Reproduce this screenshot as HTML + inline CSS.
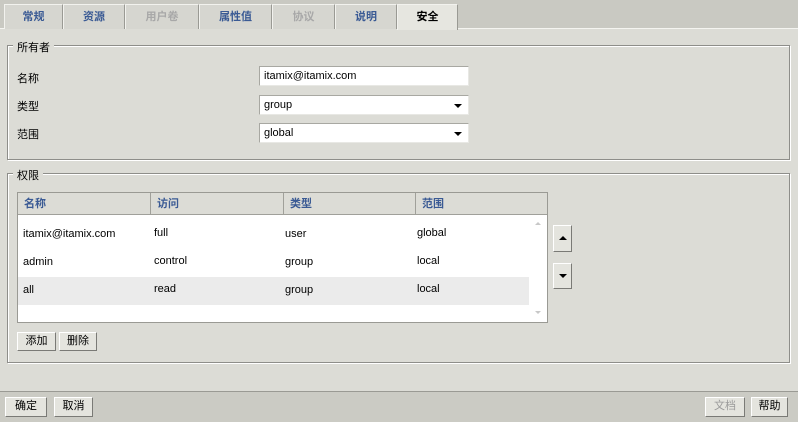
<!DOCTYPE html><html><head><meta charset="utf-8"><style>
*{box-sizing:border-box}
body{margin:0;width:798px;height:422px;background:#dcdcd6;font-family:"Liberation Sans","Noto Sans CJK SC",sans-serif;font-size:11px;color:#000;position:relative;overflow:hidden}
.a{position:absolute}
.tabbar{left:0;top:0;width:798px;height:29px;background:#c9c9c2;border-bottom:1px solid #f4f4f0}
.tab{top:4px;height:25px;background:#d6d6d0;border:1px solid #f2f2ee;border-right-color:#9a9a94;border-bottom:none;text-align:center;line-height:24px;font-weight:bold;color:#3a5a94;font-size:11px}
.tab.dis{color:#a8a8a8}
.tab.act{background:#e6e6e0;color:#000;height:26px}
fieldset{position:absolute;margin:0;padding:0;border:1px solid #8e8e8a;box-shadow:1px 1px 0 #fff inset,1px 1px 0 #fff}
.leg{background:#dcdcd6;padding:0 4px}
.inp{left:259px;width:210px;height:20px;background:#fff;border:1px solid #a8a8a2;border-right-color:#e8e8e4;border-bottom-color:#e8e8e4;padding-left:4px;line-height:18px}
.arr{right:6px;top:8px;width:0;height:0;border-left:4px solid transparent;border-right:4px solid transparent;border-top:4px solid #000}
.btn{height:19px;background:#e4e4de;border:1px solid #fff;border-right-color:#7a7a76;border-bottom-color:#7a7a76;text-align:center;line-height:17px}
.th{top:193px;height:22px;line-height:22px;color:#3a5a94;font-weight:bold;padding-left:6px;border-right:1px solid #a0a09a}
.td{padding-left:6px}
</style></head><body>
<div class="a tabbar"></div>
<div class="a tab" style="left:4px;width:59px">常规</div>
<div class="a tab" style="left:63px;width:62px">资源</div>
<div class="a tab dis" style="left:125px;width:74px">用户卷</div>
<div class="a tab" style="left:199px;width:73px">属性值</div>
<div class="a tab dis" style="left:272px;width:63px">协议</div>
<div class="a tab" style="left:335px;width:62px">说明</div>
<div class="a tab act" style="left:397px;width:61px">安全</div>

<fieldset style="left:7px;top:45px;width:783px;height:115px"></fieldset>
<div class="a leg" style="left:13px;top:39px">所有者</div>
<div class="a" style="left:17px;top:70px">名称</div>
<div class="a" style="left:17px;top:98px">类型</div>
<div class="a" style="left:17px;top:126px">范围</div>
<div class="a inp" style="top:66px">itamix@itamix.com</div>
<div class="a inp" style="top:95px">group<div class="a arr"></div></div>
<div class="a inp" style="top:123px">global<div class="a arr"></div></div>

<fieldset style="left:7px;top:173px;width:783px;height:190px"></fieldset>
<div class="a leg" style="left:13px;top:167px">权限</div>
<div class="a" style="left:17px;top:192px;width:531px;height:131px;background:#fff;border:1px solid #9a9a94"></div>
<div class="a" style="left:18px;top:193px;width:529px;height:22px;background:#dcdcd6;border-bottom:1px solid #a0a09a"></div>
<div class="a th" style="left:18px;width:133px">名称</div>
<div class="a th" style="left:151px;width:133px">访问</div>
<div class="a th" style="left:284px;width:132px">类型</div>
<div class="a th" style="left:416px;width:131px;border-right:none">范围</div>
<div class="a" style="left:18px;top:277px;width:511px;height:28px;background:#ebebeb"></div>
<div class="a" style="left:530px;top:216px;width:17px;height:106px;background:#fff"></div>
<div class="a" style="left:535px;top:222px;border-left:3px solid transparent;border-right:3px solid transparent;border-bottom:3px solid #c8c8c8"></div>
<div class="a" style="left:535px;top:311px;border-left:3px solid transparent;border-right:3px solid transparent;border-top:3px solid #c8c8c8"></div>
<div class="a td" style="left:17px;top:228px">itamix@itamix.com</div>
<div class="a td" style="left:148px;top:227px">full</div>
<div class="a td" style="left:279px;top:228px">user</div>
<div class="a td" style="left:411px;top:227px">global</div>
<div class="a td" style="left:17px;top:256px">admin</div>
<div class="a td" style="left:148px;top:255px">control</div>
<div class="a td" style="left:279px;top:256px">group</div>
<div class="a td" style="left:411px;top:255px">local</div>
<div class="a td" style="left:17px;top:284px">all</div>
<div class="a td" style="left:148px;top:283px">read</div>
<div class="a td" style="left:279px;top:284px">group</div>
<div class="a td" style="left:411px;top:283px">local</div>
<div class="a btn" style="left:553px;top:225px;width:19px;height:27px"><div class="a" style="left:5px;top:10px;border-left:4px solid transparent;border-right:4px solid transparent;border-bottom:4px solid #000"></div></div>
<div class="a btn" style="left:553px;top:263px;width:19px;height:26px"><div class="a" style="left:5px;top:10px;border-left:4px solid transparent;border-right:4px solid transparent;border-top:4px solid #000"></div></div>
<div class="a btn" style="left:17px;top:332px;width:39px">添加</div>
<div class="a btn" style="left:59px;top:332px;width:38px">删除</div>

<div class="a" style="left:0;top:391px;width:798px;height:31px;background:#cbcbc4;border-top:1px solid #9a9a94"></div>
<div class="a btn" style="left:5px;top:397px;width:42px;height:20px">确定</div>
<div class="a btn" style="left:54px;top:397px;width:39px;height:20px">取消</div>
<div class="a btn" style="left:705px;top:397px;width:40px;height:20px;color:#9a9a9a">文档</div>
<div class="a btn" style="left:751px;top:397px;width:37px;height:20px">帮助</div>
</body></html>
